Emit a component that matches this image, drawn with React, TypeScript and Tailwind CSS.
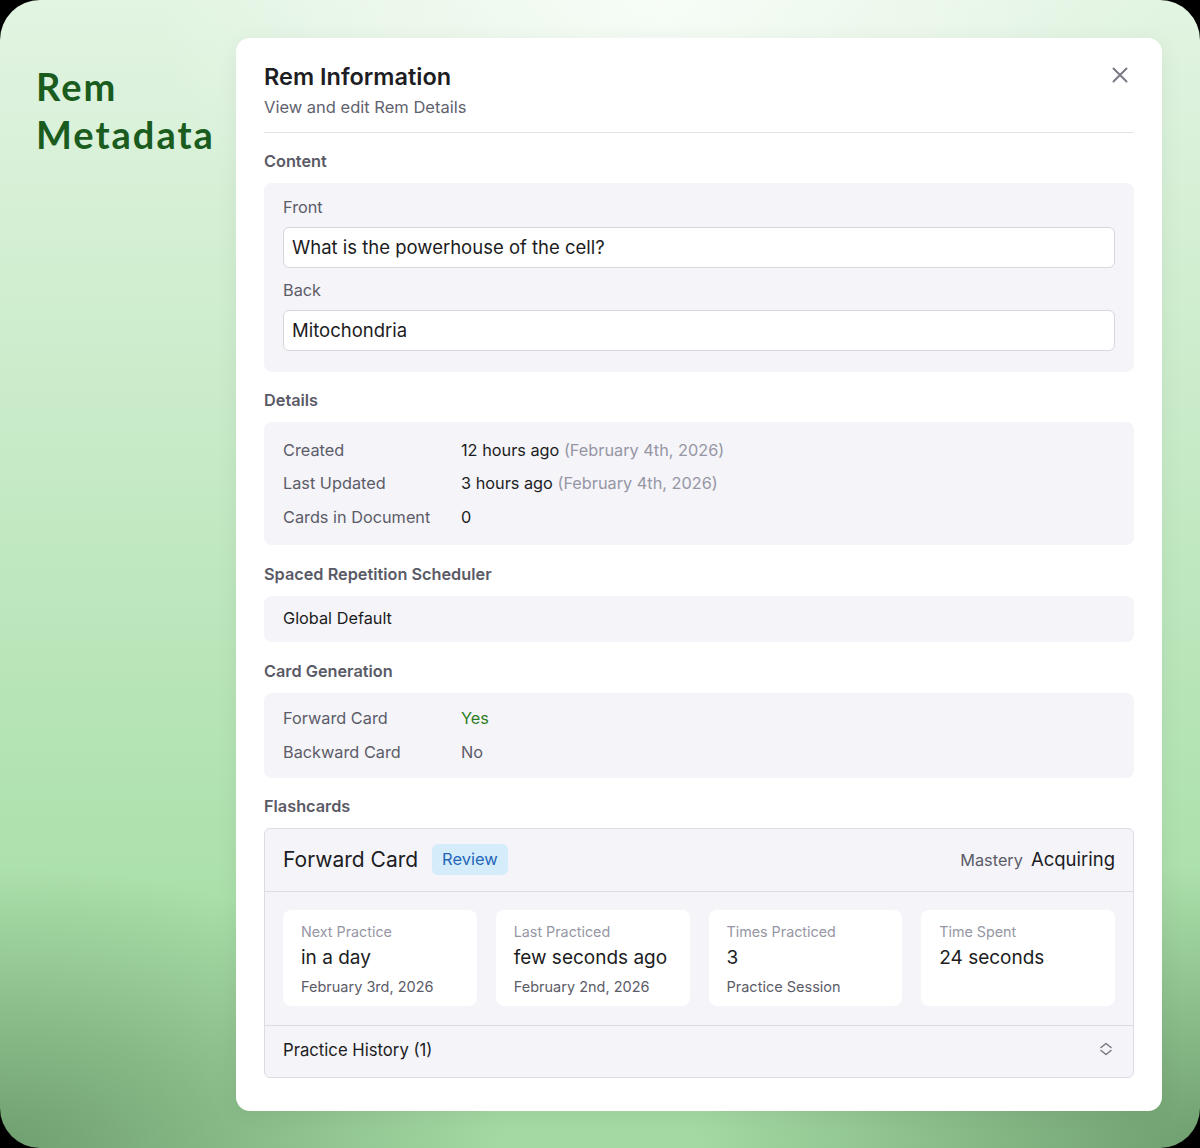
const stats = [
  { label: "Next Practice", value: "in a day", sub: "February 3rd, 2026" },
  { label: "Last Practiced", value: "few seconds ago", sub: "February 2nd, 2026" },
  { label: "Times Practiced", value: "3", sub: "Practice Session" },
  { label: "Time Spent", value: "24 seconds", sub: "" },
]

function SectionLabel({ children }: { children: React.ReactNode }) {
  return <h3 className="text-[16.3px] font-semibold text-[#5a5a66] leading-6 mb-[10px]">{children}</h3>
}

function Row({ label, children }: { label: string; children: React.ReactNode }) {
  return (
    <div className="flex items-center h-[33.5px]">
      <span className="w-[178px] text-[#5c5c68]">{label}</span>
      <span className="text-[#1c1c22]">{children}</span>
    </div>
  )
}

export default function App() {
  return (
    <div className="bg-black w-[1200px] h-[1148px]" style={{ fontFamily: "Inter, 'Noto Sans', sans-serif" }}>
      <div
        className="relative h-full w-full rounded-[40px] overflow-hidden flex items-start pt-[38px]"
        style={{
          backgroundImage: `radial-gradient(60% 45% at 55% 0%, rgba(248,253,248,.95) 0%, transparent 70%),
                            radial-gradient(60% 35% at 0% 100%, rgba(60,100,60,.5) 0%, transparent 70%),
                            radial-gradient(60% 35% at 100% 100%, rgba(60,100,60,.5) 0%, transparent 70%),
                            linear-gradient(180deg, #e2f4e2 0%, #c6eac6 40%, #a9dfa9 80%, #a3d9a3 100%)`,
        }}
      >
        {/* Left title */}
        <div className="w-[236px] pl-[36px] pt-[24px]">
          <h1
            className="text-[38px] font-bold leading-[48px] text-[#1a5c1e] tracking-[2px]"
            style={{ fontFamily: "Lato, Inter, sans-serif" }}
          >
            Rem
            <br />
            Metadata
          </h1>
        </div>

        {/* Dialog */}
        <div className="w-[926px] bg-white rounded-[14px] shadow-[0_4px_24px_rgba(0,0,0,0.06)] px-[28px] pt-[24px] pb-[33px] text-[16.3px]">
          <div className="flex items-start justify-between">
            <div>
              <h2 className="text-[23.5px] font-semibold text-[#1d1d24] leading-[30px]">Rem Information</h2>
              <p className="text-[16.5px] text-[#62626e] leading-6 mt-[3px]">View and edit Rem Details</p>
            </div>
            <svg width="16" height="16" viewBox="0 0 16 16" className="mt-[5px] mr-[6px] text-[#7a7a86]" fill="none" stroke="currentColor" strokeWidth="2" strokeLinecap="round">
              <path d="M1.5 1.5l13 13M14.5 1.5l-13 13" />
            </svg>
          </div>
          <div className="h-px bg-[#e3e3e8] mt-[13px]" />

          <div className="mt-[16px]">
            <SectionLabel>Content</SectionLabel>
            <div className="bg-[#f4f4f9] rounded-[8px] px-[19px] pt-[12px] pb-[21px]">
              <div className="text-[#5c5c68] leading-6">Front</div>
              <div className="mt-[8px] h-[41px] bg-white border border-[#d6d6de] rounded-[6px] px-[8px] flex items-center text-[18.5px] text-[#1c1c22]">
                What is the powerhouse of the cell?
              </div>
              <div className="text-[#5c5c68] leading-6 mt-[10px]">Back</div>
              <div className="mt-[8px] h-[41px] bg-white border border-[#d6d6de] rounded-[6px] px-[8px] flex items-center text-[18.5px] text-[#1c1c22]">
                Mitochondria
              </div>
            </div>

            <div className="mt-[16px]">
              <SectionLabel>Details</SectionLabel>
              <div className="bg-[#f4f4f9] rounded-[8px] px-[19px] py-[11px]">
                <Row label="Created">
                  12 hours ago <span className="text-[#9696a4]">(February 4th, 2026)</span>
                </Row>
                <Row label="Last Updated">
                  3 hours ago <span className="text-[#9696a4]">(February 4th, 2026)</span>
                </Row>
                <Row label="Cards in Document">0</Row>
              </div>
            </div>

            <div className="mt-[17px]">
              <SectionLabel>Spaced Repetition Scheduler</SectionLabel>
              <div className="bg-[#f4f4f9] rounded-[8px] px-[19px] h-[46px] flex items-center text-[#1c1c22]">
                Global Default
              </div>
            </div>

            <div className="mt-[17px]">
              <SectionLabel>Card Generation</SectionLabel>
              <div className="bg-[#f4f4f9] rounded-[8px] px-[19px] pt-[9px] pb-[9px]">
                <Row label="Forward Card">
                  <span className="text-[#2e7d1e]">Yes</span>
                </Row>
                <Row label="Backward Card">
                  <span className="text-[#5c5c68]">No</span>
                </Row>
              </div>
            </div>

            <div className="mt-[16px]">
              <SectionLabel>Flashcards</SectionLabel>
              <div className="bg-[#f4f4f9] rounded-[6px] border border-[#dcdce4]">
                <div className="h-[62px] px-[18px] flex items-center justify-between">
                  <div className="flex items-center gap-[14px]">
                    <span className="text-[21px] text-[#1c1c22]">Forward Card</span>
                    <span className="bg-[#d5edfb] text-[#2566b8] text-[16.5px] rounded-[6px] px-[10px] h-[31px] flex items-center">
                      Review
                    </span>
                  </div>
                  <div className="flex items-baseline gap-[8px]">
                    <span className="text-[#5c5c68]">Mastery</span>
                    <span className="text-[18.5px] text-[#1c1c22]">Acquiring</span>
                  </div>
                </div>
                <div className="border-t border-[#dcdce4] px-[18px] pt-[18px] pb-[19px] grid grid-cols-4 gap-[19px]">
                  {stats.map((s) => (
                    <div key={s.label} className="bg-white rounded-[8px] h-[96px] px-[18px] pt-[12px]">
                      <div className="text-[14.3px] text-[#9696a4] leading-5">{s.label}</div>
                      <div className="text-[19px] text-[#1c1c22] leading-7 mt-[2px]">{s.value}</div>
                      {s.sub && <div className="text-[14.5px] text-[#5c5c68] leading-5 mt-[5px]">{s.sub}</div>}
                    </div>
                  ))}
                </div>
                <div className="border-t border-[#dcdce4] h-[52px] px-[18px] flex items-center justify-between">
                  <span className="text-[16.7px] text-[#1c1c22]">Practice History (1)</span>
                  <svg width="14" height="14" viewBox="0 0 14 14" className="mr-[2px] -mt-[4px] text-[#7a7a86]" fill="none" stroke="currentColor" strokeWidth="1.6" strokeLinecap="round" strokeLinejoin="round">
                    <path d="M2 5.5L7 1.5l5 4M2 8.5l5 4 5-4" />
                  </svg>
                </div>
              </div>
            </div>
          </div>
        </div>
      </div>
    </div>
  )
}
